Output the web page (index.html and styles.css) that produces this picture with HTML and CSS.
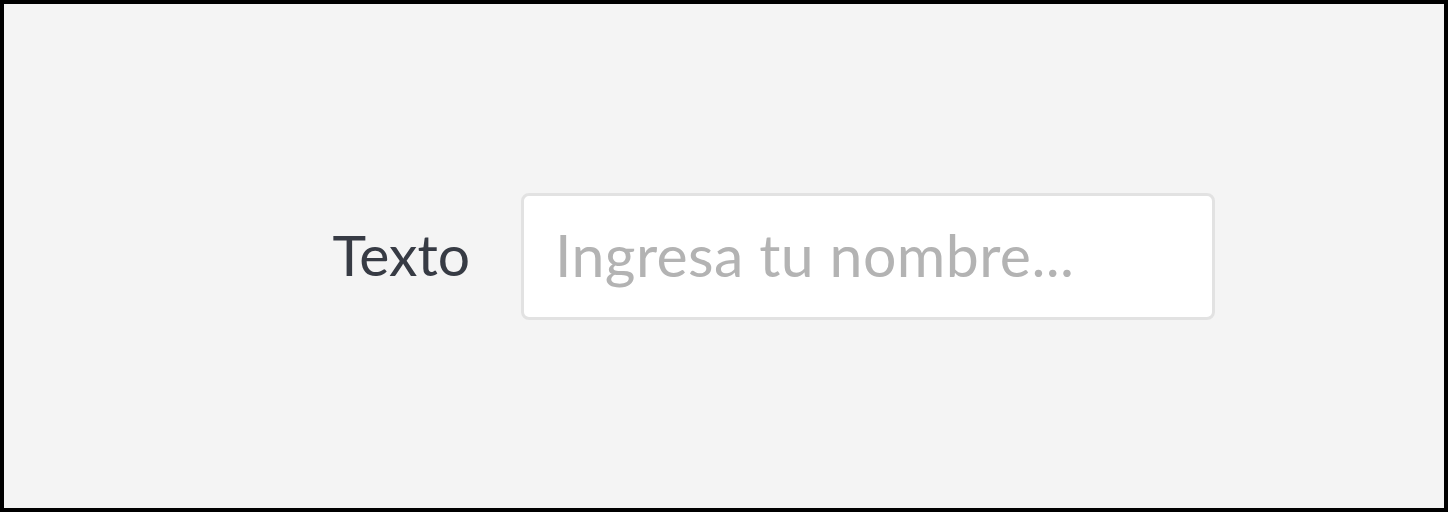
FILE: index.html
```html
<!DOCTYPE html>
<html lang="es">
<head>
    <meta charset="UTF-8">
    <meta name="viewport" content="width=device-width, initial-scale=1.0">
    <title>Texto</title>
    <link rel="stylesheet" href="styles.css">
</head>
<body>
    <div class="frame">
        <div class="field-row">
            <label class="field-label" for="nombre">Texto</label>
            <input class="field-input" type="text" id="nombre" placeholder="Ingresa tu nombre...">
        </div>
    </div>
</body>
</html>
```

FILE: styles.css
```css
html, body {
    margin: 0;
    padding: 0;
}
body {
    font-family: Lato, "Open Sans", sans-serif;
    background-color: #000;
}
.frame {
    box-sizing: border-box;
    height: 512px;
    border: 4px solid #000;
    background-color: #f4f4f4;
    display: flex;
    align-items: center;
    justify-content: center;
}
.field-row {
    display: flex;
    align-items: center;
    gap: 51px;
}
.field-label {
    width: 237px;
    text-align: right;
    font-size: 57px;
    line-height: 1;
    margin-top: -4px;
    color: #373b44;
}
.field-input {
    box-sizing: border-box;
    width: 694px;
    height: 127px;
    padding: 0 31px 4px;
    border: 3px solid #e2e2e2;
    border-radius: 8px;
    background-color: #fff;
    font-family: inherit;
    font-size: 59px;
    letter-spacing: 0.4px;
    color: #373b44;
    outline: none;
}
.field-input::placeholder {
    color: #b3b3b3;
}
```
